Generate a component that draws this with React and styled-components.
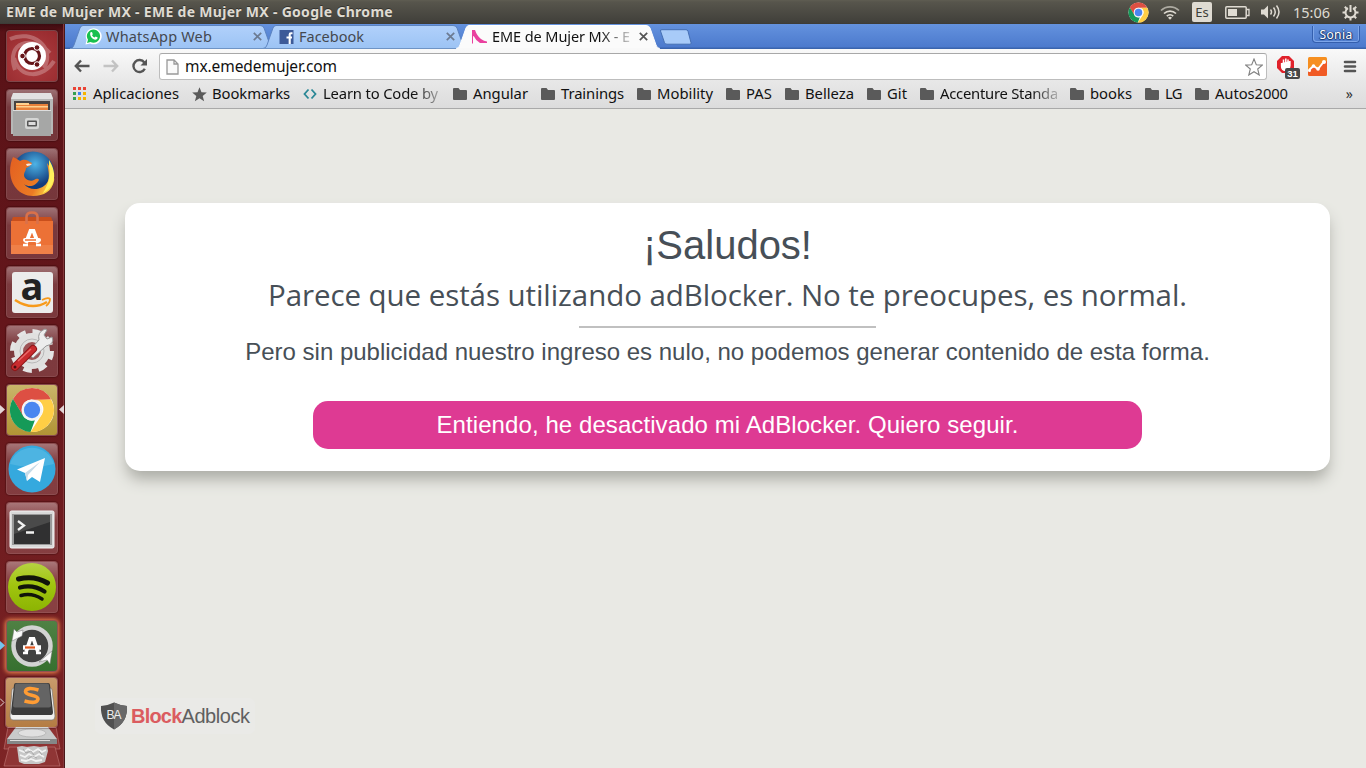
import React, { useLayoutEffect, useRef, useState } from "react";
import styled, { createGlobalStyle } from "styled-components";

const Global = createGlobalStyle`
  * { box-sizing: border-box; }
  body { margin: 0; overflow: hidden; font-family: "Noto Sans", "Open Sans", sans-serif; }
  svg { display: block; flex: none; }
`;

const Desktop = styled.div`
  width: 1366px;
  height: 768px;
  display: flex;
  flex-direction: column;
  overflow: hidden;
`;

/* Text tracked so that it fills a given width */
const Tracked = styled.span`
  display: inline-block;
  white-space: pre;
`;

function Fit({ width, children }) {
  const ref = useRef(null);
  const [spacing, setSpacing] = useState(0);
  useLayoutEffect(() => {
    const natural = ref.current.getBoundingClientRect().width;
    setSpacing((width - natural) / children.length);
  }, []);
  return <Tracked ref={ref} style={{ letterSpacing: spacing }}>{children}</Tracked>;
}

/* ---------- top panel ---------- */
const Panel = styled.header`
  height: 24px;
  flex: none;
  display: flex;
  align-items: center;
  justify-content: space-between;
  padding: 0 7px 0 6px;
  background: linear-gradient(#5f5d52 0, #57554c 2px, #403f3a 23px, #3a3934 24px);
  color: #dfdbd2;
`;
const PanelTitle = styled.div`
  font-size: 14px;
  font-weight: 700;
  line-height: 22px;
  text-shadow: 0 -1px #33322e;
`;
const Indicators = styled.div`
  display: flex;
  align-items: center;
  height: 24px;
`;
const Indicator = styled.div`
  margin-right: ${(p) => p.$gap}px;
`;
const Keyboard = styled.div`
  width: 20px;
  height: 20px;
  margin-right: 13px;
  border-radius: 2px;
  background: #dfdbd2;
  color: #3f3e39;
  font-size: 13px;
  line-height: 20px;
  text-align: center;
`;
const Clock = styled.div`
  font-size: 14.5px;
  line-height: 22px;
  margin-right: 12px;
`;

function ChromeLogo({ size }) {
  return (
    <svg width={size} height={size} viewBox="0 0 48 48">
      <circle cx="24" cy="24" r="23" fill="#fff" />
      <path d="M24 1a23 23 0 0 1 20 12H24a11 11 0 0 0-10.500 8L4.100 12.500A23 23 0 0 1 24 1z" fill="#dd4f43" />
      <path d="M4.100 12.500 14.500 30A11 11 0 0 0 27 34.600L22.500 47A23 23 0 0 1 4.100 12.500z" fill="#159a58" />
      <path d="M44 13a23 23 0 0 1-21.500 34L33.500 30A11 11 0 0 0 29 13z" fill="#ffce45" />
      <path d="M24 13H44L24 14zM4.100 12.500 14.500 30V18z" fill="#dd4f43" />
      <path d="M4.100 12.500 14.500 30 10 30z" fill="#159a58" />
      <circle cx="24" cy="24" r="11" fill="#f4f4f4" />
      <circle cx="24" cy="24" r="8.500" fill="#4a86f0" />
    </svg>
  );
}

function TopPanel() {
  return (
    <Panel>
      <PanelTitle><Fit width={387}>EME de Mujer MX - EME de Mujer MX - Google Chrome</Fit></PanelTitle>
      <Indicators>
        <Indicator $gap={11}><ChromeLogo size={21} /></Indicator>
        <Indicator $gap={12}>
          <svg width="20" height="16" viewBox="0 0 20 16" fill="none" stroke="#dfdbd2" strokeWidth="1.700">
            <path d="M1 6.500a13 13 0 0 1 18 0" opacity=".65" />
            <path d="M4 9.500a8.700 8.700 0 0 1 12 0" />
            <path d="M6.800 12.200a4.600 4.600 0 0 1 6.400 0" />
            <path d="M8 13.700a3 3 0 0 1 4 0l-2 2z" fill="#dfdbd2" stroke="none" />
          </svg>
        </Indicator>
        <Keyboard>Es</Keyboard>
        <Indicator $gap={11}>
          <svg width="25" height="13" viewBox="0 0 25 13">
            <rect x=".8" y=".8" width="20.400" height="11.400" rx="1" fill="none" stroke="#dfdbd2" strokeWidth="1.500" />
            <path d="M22 3.500h2v6h-2" fill="none" stroke="#dfdbd2" strokeWidth="1.300" />
            <rect x="3" y="3" width="9" height="7" fill="#dfdbd2" />
          </svg>
        </Indicator>
        <Indicator $gap={11}>
          <svg width="21" height="16" viewBox="0 0 21 16" fill="none" stroke="#dfdbd2" strokeWidth="1.500">
            <path d="M0 5.500h3l4-4v13l-4-4H0z" fill="#dfdbd2" stroke="none" />
            <path d="M9.500 5.500q2 2.500 0 5M12.500 3.500q3.500 4.500 0 9M15.500 1.500q5 6.500 0 13" />
          </svg>
        </Indicator>
        <Clock><Fit width={37}>15:06</Fit></Clock>
        <svg width="17" height="17" viewBox="0 0 17 17" fill="none" stroke="#dfdbd2" strokeWidth="2">
          <path d="M6 4.200a5 5 0 1 0 5 0M8.500 1v7" />
          <path d="M.5 8.500h3M13.500 8.500h3M8.500 13.500v3M2.800 2.800l2.200 2.200M14.200 2.800 12 5M2.800 14.200 5 12M14.200 14.200 12 12" />
        </svg>
      </Indicators>
    </Panel>
  );
}

/* ---------- launcher ---------- */
const Body = styled.div`
  flex: 1;
  display: flex;
  min-height: 0;
`;
const Launcher = styled.nav`
  width: 65px;
  flex: none;
  padding: 6px 0 0 6px;
  display: flex;
  flex-direction: column;
  gap: 7px;
  background: linear-gradient(#3d0b10 0, #591217 8px, #64161b 40%, #7d2425 100%);
  border-right: 1px solid #4a1719;
  box-shadow: inset -1px 0 #85393b;
`;
const tints = {
  red: "radial-gradient(circle at 50% 60%, #b14043, #96292d)",
  glass: "linear-gradient(rgba(255,255,255,.4), rgba(255,255,255,.16) 35%, rgba(255,255,255,.15))",
  gold: "linear-gradient(#c9b56a, #b19435)",
  green: "linear-gradient(#4f8144, #36702f)",
  tan: "linear-gradient(#c99b6c, #b47c43)",
};
const Tile = styled.div`
  position: relative;
  width: 52px;
  height: 52px;
  flex: none;
  display: flex;
  align-items: center;
  justify-content: center;
  border-radius: 4px;
  border: 1px solid rgba(255, 255, 255, 0.22);
  background: ${(p) => tints[p.$tint]};
  background-clip: padding-box;
  box-shadow: ${(p) => (p.$glow ? "0 0 4px 1px #ef8a50" : "0 0 1px 1px rgba(40,0,0,.3)")};
  ${(p) => p.$folded && "margin: -2px 0 0 -1px; width: 53px; height: 51px;"}
`;
const Pip = styled.svg`
  position: absolute;
  top: 20px;
  left: ${(p) => (p.$right ? 51 : -7)}px;
`;
const Stack = styled.div`
  margin: -8px 0 0 -3px;
`;

const glyphs = {
  ubuntu: (
    <svg width="50" height="50" viewBox="0 0 50 50">
      <g fill="none" stroke="#fff" strokeWidth="4" opacity=".25">
        <path d="M8 39C-2 10 26 4 43 22" /><path d="M3 8c22-10 46 8 34 29" /><path d="M47 30c-10 17-34 19-40-3" />
      </g>
      <circle cx="25" cy="25" r="14" fill="#fff" />
      <circle cx="25" cy="25" r="7.500" fill="none" stroke="#661519" strokeWidth="3.200" />
      <g fill="#661519" stroke="#fff" strokeWidth="1"><circle cx="15.500" cy="25" r="2.800" /><circle cx="30" cy="16.500" r="2.800" /><circle cx="30" cy="33.500" r="2.800" /></g>
    </svg>
  ),
  files: (
    <svg width="50" height="50" viewBox="0 0 50 50">
      <path d="M6 4q0-1 1-1h36q1 0 1 1l2 4v36H4V8z" fill="#b7b8b7" />
      <path d="M6 3h38l2 6H4z" fill="#e2e2e2" />
      <path d="M7 11h36v12H7z" fill="#474342" />
      <path d="M9 14h32v8H9z" fill="#e8813a" /><path d="M9 13h13v2H9zM9 16h32v1.500H9z" fill="#ffd18e" />
      <path d="M6 20h38v26H6z" fill="#a6a7a6" /><path d="M6 20h38v1H6z" fill="#ddd" />
      <rect x="18" y="28" width="14" height="11" rx="2" fill="#d5d6d5" /><rect x="20" y="30.500" width="10" height="6" rx="1" fill="#555" /><path d="M21.500 32h7v3h-7z" fill="#ddd" />
    </svg>
  ),
  firefox: (
    <svg width="50" height="50" viewBox="0 0 50 50">
      <defs>
        <radialGradient id="globe" cx="55%" cy="30%"><stop offset="0" stopColor="#4db3e6" /><stop offset="1" stopColor="#123c7c" /></radialGradient>
        <linearGradient id="fox" x1="0" x2="1" y1=".3" y2=".7"><stop offset="0" stopColor="#e46322" /><stop offset=".65" stopColor="#eb7b24" /><stop offset="1" stopColor="#ffe04a" /></linearGradient>
      </defs>
      <circle cx="26" cy="23.500" r="21" fill="url(#globe)" />
      <path d="M6 8c3 1 5 3 7 4 5-3 8 0 12 2-1 3-4 4-6 5 0 3-2 4-2 7 0 4 6 7 10 5 2-1 4-2 5 0-3 6-10 8-15 4 6 8 20 6 24-3 2-6 0-12-1-18 5 7 8 14 7 18-2 10-10 15-21 15C7 47-2 26 6 8z" fill="url(#fox)" />
      <path d="M42 11c4 6 7 15 4 22-2 6-6 9-10 11 5-8 8-17 6-26z" fill="#fff05c" />
      <path d="M19 15q3-1 6 0-2 2-5 2z" fill="#f7e9df" />
    </svg>
  ),
  software: (
    <svg width="50" height="50" viewBox="0 0 50 50">
      <path d="m6 9 38 0 2 5H4z" fill="#c94f1c" />
      <path d="M4 13h42v33H4z" fill="#ec7136" /><path d="M4 37h42v9H4z" fill="#ef8048" />
      <path d="M19.500 16V9q0-4.500 5.500-4.500T30.500 9v7" fill="none" stroke="#d9714a" strokeWidth="2.600" />
      <path d="m19 35 4.500-12h3l4.500 12" fill="none" stroke="#fff" strokeWidth="3.800" />
      <path d="M16 37h5M29 37h5" stroke="#fff" strokeWidth="2.500" />
      <rect x="16" y="30" width="18" height="4" rx="2" fill="#fff" /><path d="M18 32h11" stroke="#ec7136" strokeWidth="1.500" />
    </svg>
  ),
  amazon: (
    <svg width="50" height="50" viewBox="0 0 50 50">
      <rect x="5" y="5" width="41" height="41" rx="3" fill="#ececec" />
      <text x="25" y="33" textAnchor="middle" fontFamily="Open Sans, sans-serif" fontWeight="700" fontSize="38" fill="#222">a</text>
      <path d="M8 33q17 11 32 2" fill="none" stroke="#f79a1c" strokeWidth="2.600" />
      <path d="M35 33q6-3 8-1 0 4-4 7" fill="none" stroke="#f79a1c" strokeWidth="1.800" />
    </svg>
  ),
  settings: (
    <svg width="50" height="50" viewBox="0 0 50 50">
      <circle cx="25" cy="25" r="19.500" fill="none" stroke="#e4e4e4" strokeWidth="5" strokeDasharray="8.500 6.800" />
      <circle cx="25" cy="25" r="13.500" fill="#9c5356" stroke="#e0e0df" strokeWidth="9" />
      <circle cx="25" cy="25" r="12" fill="none" stroke="#b9b9b9" strokeWidth="1" />
      <path d="m20 27 12-13q-2-8 6-11l2 1-3 5 3 4 5-2q3 7-6 9L26 32z" fill="#ededed" stroke="#999" />
      <path d="m8 41 18-18" stroke="#8e1619" strokeWidth="8" strokeLinecap="round" />
      <path d="m8 41 18-18" stroke="#c92b2e" strokeWidth="6" strokeLinecap="round" />
      <path d="m11 35 13-12" stroke="#ea6969" strokeWidth="1.500" /><circle cx="8" cy="41" r="1.500" fill="#4c0e10" />
    </svg>
  ),
  chrome: <ChromeLogo size={46} />,
  telegram: (
    <svg width="50" height="50" viewBox="0 0 50 50">
      <circle cx="25" cy="25" r="23.500" fill="#35a9de" /><path d="M3 20a23 23 0 0 1 44 0Q25 26 3 20z" fill="#65bfe5" opacity=".5" />
      <path d="M10 25.500 38 14l-5 24-8-5-5 4-2-8z" fill="#fff" /><path d="m18 29 15-11-12 13-1 6z" fill="#c6dbe8" />
    </svg>
  ),
  terminal: (
    <svg width="50" height="50" viewBox="0 0 50 50">
      <rect x="3" y="8" width="44" height="37" rx="1.500" fill="#d9d9d9" stroke="#f4f4f4" />
      <path d="M5 11h40v31H5z" fill="#999" /><path d="M7 12h36v29H7z" fill="#303031" /><path d="M7 12h36v7L7 31z" fill="#4a4a4a" />
      <path d="m11 18 6 4.500-6 4.500M19 29.500h8" fill="none" stroke="#f2f2f2" strokeWidth="2.300" />
    </svg>
  ),
  spotify: (
    <svg width="50" height="50" viewBox="0 0 50 50">
      <defs><linearGradient id="lime" x2="0" y2="1"><stop stopColor="#b6d242" /><stop offset=".45" stopColor="#a1c50f" /><stop offset="1" stopColor="#8cb402" /></linearGradient></defs>
      <circle cx="25" cy="25" r="24" fill="url(#lime)" />
      <g fill="none" stroke="#11140a" strokeLinecap="round"><path d="M11.500 17q16-4 29 4" strokeWidth="5" /><path d="M13 25.500q13-3.500 24.500 4" strokeWidth="4.200" /><path d="M14 33.500q11-3 21 3.500" strokeWidth="3.500" /></g>
    </svg>
  ),
  updater: (
    <svg width="50" height="50" viewBox="0 0 50 50">
      <circle cx="25" cy="25" r="18.500" fill="#414241" stroke="#d2d3d2" strokeWidth="4.500" />
      <path d="M5 20 7 8l3 3 6-2-1 6zM45 30l-2 13-3-4-8 2z" fill="#fafafa" stroke="#777" strokeWidth=".5" />
      <path d="m19 31 4.500-13h3l4.500 13" fill="none" stroke="#fff" strokeWidth="3.800" /><path d="M16 32h5M29 32h5" stroke="#fff" strokeWidth="2.500" />
      <path d="M16 26.500h18" stroke="#fff" strokeWidth="4.500" /><path d="M18 26.500h10" stroke="#e2551d" strokeWidth="2.200" />
    </svg>
  ),
  sublime: (
    <svg width="50" height="50" viewBox="0 0 50 50">
      <path d="M7 10h36q2 0 2 2l3 26q0 4-3 4H6q-3 0-3-4L5 12q0-2 2-2z" fill="#f0f0ef" stroke="#777" strokeWidth=".7" />
      <path d="M9 5h32q2 0 2 2l3 27q0 3-2 3H6q-2 0-2-3L7 7q0-2 2-2z" fill="#3b3b3b" />
      <path d="M10 5.500h30q2 0 2 2l2 20q0 2-2 2H8q-2 0-2-2l2-20q0-2 2-2z" fill="#646464" />
      <path d="M31.500 12q-12-3.500-13 1.500c0 5 12.500 2.500 12.500 7.500q-1 5.500-13.500 2" fill="none" stroke="#ff9c34" strokeWidth="3.600" />
    </svg>
  ),
};

const dock = [
  ["ubuntu", "red"], ["files", "glass"], ["firefox", "glass"], ["software", "glass"], ["amazon", "glass"],
  ["settings", "glass"], ["chrome", "gold"], ["telegram", "glass"], ["terminal", "glass"], ["spotify", "glass"],
  ["updater", "green"], ["sublime", "tan"],
];

function Dock() {
  return (
    <Launcher>
      {dock.map(([name, tint]) => (
        <Tile key={name} $tint={tint} $glow={name === "updater"} $folded={name === "sublime"}>
          {glyphs[name]}
          {name === "chrome" && <>
            <Pip width="6" height="9"><path d="M0 0 5 4.500 0 9z" fill="#e4d6d7" /></Pip>
            <Pip $right width="6" height="9"><path d="M6 0 1 4.500 6 9z" fill="#e4d6d7" /></Pip>
          </>}
          {name === "updater" && <Pip width="6" height="9"><path d="M0 0 5 4.500 0 9z" fill="#74c4ee" /></Pip>}
          {name === "sublime" && <Pip width="6" height="9"><path d="M1 .5 5 4.500 1 8.500" fill="none" stroke="#e4d6d7" /></Pip>}
        </Tile>
      ))}
      <Stack>
        <svg width="58" height="42" viewBox="0 0 58 42">
          <path d="M5 0h48l4 22H1z" fill="#8f3333" stroke="#c27b79" strokeWidth=".6" />
          <path d="M13 0h32l9 12H4z" fill="#c9caca" /><path d="M4 12h50v5H4z" fill="#858787" /><path d="M7 13h40v1H7z" fill="#ddd" />
          <ellipse cx="29" cy="6" rx="14" ry="4" fill="#e0e0e0" stroke="#aaa" strokeWidth=".7" />
          <path d="M6 20h46l5 19H1z" fill="#8f3535" stroke="#c27b79" strokeWidth=".6" />
          <path d="m14 20 5-1 5 1 7-1 6 1 7-1 1 5-3 11-6 2H21l-5-2z" fill="#c7c7c7" />
          <path d="m16 23 5 2 4-3 5 3 5-3 4 3 4-2M17 28l5 2 4-3 5 3 5-3 5 3M18 33l5 1 5-2 5 2 6-1" fill="none" stroke="#f2f2f2" strokeWidth="1.800" />
          <path d="m20 22 3 4 5-2 3 4M25 32l4-3 5 2M36 24l3 4" fill="none" stroke="#999" strokeWidth=".7" />
        </svg>
      </Stack>
    </Launcher>
  );
}

/* ---------- browser ---------- */
const Browser = styled.main`
  flex: 1;
  min-width: 0;
  display: flex;
  flex-direction: column;
`;
const TabStrip = styled.div`
  height: 25px;
  flex: none;
  display: flex;
  padding-left: 7px;
  background: linear-gradient(#6492de, #4c7acd 23px, #3a64ad 24px, #3a64ad);
`;
const Tab = styled.div`
  position: relative;
  z-index: ${(p) => (p.$active ? 2 : 1)};
  width: 204px;
  height: 25px;
  margin-right: -11px;
  padding: 0 14px 0 13px;
  display: flex;
  align-items: center;
  gap: 4px;
  color: ${(p) => (p.$active ? "#111" : "#44484f")};
`;
const TabShape = styled.svg`
  position: absolute;
  inset: 0 auto auto -2px;
  z-index: -1;
`;
const TabTitle = styled.div`
  flex: 1;
  min-width: 0;
  height: 23px;
  line-height: 23px;
  font-size: 14.500px;
  white-space: nowrap;
  ${(p) => p.$fade && "mask-image: linear-gradient(90deg, #000 108px, transparent 146px);"}
`;
const NewTab = styled.svg`
  margin: 5px 0 0 8px;
`;
const UserBadge = styled.div`
  margin: 2px 6px 0 auto;
  width: 48px;
  height: 17px;
  border: 1px solid #345fae;
  border-top: 0;
  border-radius: 0 0 4px 4px;
  box-shadow: inset 1px -1px #7da6e9, inset -1px 0 #7da6e9;
  color: #fff;
  font-size: 12px;
  line-height: 18px;
  text-align: center;
  text-shadow: 0 1px 1px #163468, 1px 0 1px #163468, -1px 0 1px #163468;
`;
const Toolbar = styled.div`
  height: 31px;
  flex: none;
  display: flex;
  align-items: center;
  padding: 4px 8px 0 9px;
  background: linear-gradient(#f9f9f9, #e9e9e9);
`;
const Omnibox = styled.div`
  width: 1108px;
  height: 27px;
  margin: 0 9px 0 11px;
  padding: 0 3px 0 6px;
  display: flex;
  align-items: center;
  gap: 6px;
  background: #fff;
  border: 1px solid #bdbdbd;
  border-top-color: #a8a8a8;
  border-radius: 3px;
  font-size: 15.500px;
  color: #111;
`;
const Url = styled.div`
  flex: 1;
  line-height: 24px;
  padding-bottom: 2px;
`;
const Extension = styled.div`
  margin-left: ${(p) => p.$gap || 0}px;
`;
const Bookmarks = styled.div`
  height: 29px;
  flex: none;
  display: flex;
  align-items: center;
  gap: 13px;
  padding: 0 13px 0 8px;
  background: linear-gradient(#e8e8e8, #dcdcdc);
  border-bottom: 1px solid #a9a9a9;
`;
const Bookmark = styled.div`
  display: flex;
  align-items: center;
  height: 26px;
`;
const BookmarkIcon = styled.div`
  width: 20px;
`;
const BookmarkName = styled.div`
  width: ${(p) => p.$w}px;
  white-space: nowrap;
  font-size: 14.800px;
  line-height: 24px;
  padding-bottom: 2px;
  color: #111;
  ${(p) => p.$fade && "mask-image: linear-gradient(90deg, #000 calc(100% - 26px), rgba(0,0,0,.25));"}
`;
const Overflow = styled.div`
  margin-left: auto;
  font-size: 14px;
  line-height: 24px;
  color: #333;
`;

function TabBox({ active, icon, title, width }) {
  return (
    <Tab $active={active}>
      <TabShape width="204" height="25" viewBox="0 0 204 25">
        <defs><linearGradient id="tabBlue" x2="0" y2="1"><stop stopColor="#b1d1fb" /><stop offset="1" stopColor="#9cc3f4" /></linearGradient></defs>
        <path d="M0 24.500Q3 24.500 4 21L10 4Q11 1.500 13 1.500H190Q193 1.500 194 4L200 21Q201 24.500 204 24.500" fill={active ? "#fbfbfb" : "url(#tabBlue)"} stroke={active ? "#fff" : "#587fbb"} strokeWidth={active ? 1 : 0.9} />
        {active ? <path d="M1 24.500H203" stroke="#f9f9f9" /> : <path d="M0 24.500H204" stroke="#6f94c5" />}
      </TabShape>
      {icon}
      <TabTitle $fade={active}><Fit width={width}>{title}</Fit></TabTitle>
      <svg width="9" height="9" viewBox="0 0 9 9"><path d="m.8.8 7.400 7.400M8.200.8.800 8.200" stroke={active ? "#555" : "#6c7b92"} strokeWidth="1.700" /></svg>
    </Tab>
  );
}

const whatsapp = (
  <svg width="17" height="17" viewBox="0 0 17 17">
    <path d="M.5 16.500 1.600 12A8 8 0 1 1 5 15.400z" fill="#fff" />
    <path d="M2 15 3 11.800A6.600 6.600 0 1 1 5.500 14z" fill="#19c04f" />
    <path d="M5.500 4.200 7 4l.8 2.200-.8 1q1 1.700 2.600 2.400l1-1.100 2.100 1q0 2-2.200 2.300C7.500 11.500 4 7.500 5.500 4.200z" fill="#fff" />
  </svg>
);
const facebook = (
  <svg width="17" height="16" viewBox="0 0 17 16"><path d="M1.500 1h14v14h-14z" fill="#3d5a98" /><path d="M14.500 4.200H13q-1.300 0-1.300 1.300V15M8.500 8.500H14" fill="none" stroke="#fff" strokeWidth="2.100" /></svg>
);
const shoe = (
  <svg width="17" height="16" viewBox="0 0 17 16"><path d="M1 1h3q2 6 6 9 3 2 6 2.500V14H9Q5 12 3 7.500L2 7v7.500H1z" fill="#ea419f" /></svg>
);
const folder = (
  <svg width="14" height="12" viewBox="0 0 14 12"><path d="M0 1q0-1 1-1h4.500l1.500 2h6q1 0 1 1v8q0 1-1 1H1q-1 0-1-1z" fill="#5a5a5a" /></svg>
);
const appGrid = (
  <svg width="14" height="14" viewBox="0 0 14 14">
    {["#ea4335", "#ea4335", "#ea4335", "#34a04f", "#3d82ee", "#f5b400", "#34a04f", "#f5b400", "#f5b400"].map((c, i) => (
      <rect key={i} x={(i % 3) * 5} y={Math.floor(i / 3) * 5} width="3" height="3" fill={c} />
    ))}
  </svg>
);
const starSolid = (
  <svg width="15" height="15" viewBox="0 0 15 15"><path d="m7.500.3 2 5 5.300.3-4.100 3.400 1.400 5.200-4.600-2.900L2.900 14.200 4.300 9 .2 5.600l5.300-.3z" fill="#5a5a5a" /></svg>
);
const brackets = (
  <svg width="14" height="12" viewBox="0 0 14 12" fill="none" stroke="#2a8795" strokeWidth="1.800"><path d="M5.500 1.500 1.500 6l4 4.500M8.500 1.500l4 4.500-4 4.500" /></svg>
);

const links = [
  [appGrid, "Aplicaciones", 86, 86], [starSolid, "Bookmarks", 78, 78], [brackets, "Learn to Code by", 117, 115, true],
  [folder, "Angular", 55, 55], [folder, "Trainings", 63, 63], [folder, "Mobility", 56, 56], [folder, "PAS", 26, 26],
  [folder, "Belleza", 49, 49], [folder, "Git", 20, 20], [folder, "Accenture Standa", 117, 118, true],
  [folder, "books", 42, 42], [folder, "LG", 17, 17], [folder, "Autos2000", 73, 73],
];

/* ---------- page ---------- */
const Page = styled.section`
  flex: 1;
  min-height: 0;
  padding: 94px 36px 0 60px;
  background: #e9e9e4;
  font-family: "Liberation Sans", Arial, sans-serif;
  color: #474f57;
`;
const Card = styled.div`
  height: 268px;
  padding-top: 19px;
  display: flex;
  flex-direction: column;
  align-items: center;
  border-radius: 15px;
  background: #fff;
  box-shadow: 0 10px 15px -2px #aaaba4;
`;
const Heading = styled.h1`
  margin: 0;
  font-size: 40px;
  font-weight: 400;
  line-height: 46px;
`;
const Lead = styled.p`
  margin: 6px 0 0;
  font-family: "Open Sans", sans-serif;
  font-size: 29.500px;
  line-height: 42px;
`;
const Rule = styled.div`
  width: 297px;
  height: 2px;
  margin-top: 10px;
  background: #c0c0c0;
`;
const Detail = styled.p`
  margin: 10px 0 0;
  font-size: 24px;
  line-height: 28px;
`;
const Confirm = styled.button`
  width: 829px;
  height: 48px;
  margin-top: 35px;
  padding: 0;
  border: 0;
  border-radius: 15px;
  background: #de3a93;
  color: #fff;
  font: 24px/48px "Liberation Sans", Arial, sans-serif;
`;
const Brand = styled.div`
  width: 160px;
  height: 36px;
  margin: 227px 0 0 -30px;
  padding-left: 5px;
  display: flex;
  align-items: center;
  gap: 3px;
  border-radius: 6px;
  background: #eaeae7;
  color: #606060;
  font-size: 20px;
`;
const Red = styled.b`
  color: #db5c60;
`;

export default function App() {
  return (
    <Desktop>
      <Global />
      <TopPanel />
      <Body>
        <Dock />
        <Browser>
          <TabStrip>
            <TabBox icon={whatsapp} title="WhatsApp Web" width={106} />
            <TabBox icon={facebook} title="Facebook" width={65} />
            <TabBox active icon={shoe} title="EME de Mujer MX - E" width={138} />
            <NewTab width="33" height="17" viewBox="0 0 33 17"><path d="M3 .7h24q1.500 0 2 1.500l3 11.500q.5 1.500-1 1.500H8q-2 0-2.500-1.500L1.500 2Q1 .7 3 .7z" fill="#a8cbf8" stroke="#456fb3" /></NewTab>
            <UserBadge><Fit width={33}>Sonia</Fit></UserBadge>
          </TabStrip>
          <Toolbar>
            <svg width="74" height="17" viewBox="0 0 74 17" fill="none" strokeWidth="2.400">
              <path d="M7 2.500 1.800 8 7 13.500M2 8h13.500" stroke="#555" />
              <path d="m38 2.500 5.200 5.500-5.200 5.500M43 8H29.500" stroke="#c3c3c3" />
              <path d="M70.300 4.500a6 6 0 1 0 .5 6.300" stroke="#555" /><path d="M73 1v6.500h-6.500z" fill="#555" />
            </svg>
            <Omnibox>
              <svg width="13" height="16" viewBox="0 0 13 16"><path d="M1 1h7l4 4v10H1zM8 1v4h4" fill="#fafafa" stroke="#999" strokeWidth="1.300" /></svg>
              <Url><Fit width={152}>mx.emedemujer.com</Fit></Url>
              <svg width="18" height="18" viewBox="0 0 18 18"><path d="m9 1 2.300 5.700 6 .4-4.600 3.900 1.500 6L9 13.700 3.800 17l1.500-6L.7 7.100l6-.4z" fill="#fff" stroke="#808080" strokeWidth="1.100" /></svg>
            </Omnibox>
            <Extension>
              <svg width="24" height="24" viewBox="0 0 24 24">
                <path d="M6 1h7l5 5v7l-5 5H6l-5-5V6z" fill="#e0222b" />
                <path d="M5.500 8v3q0 4.500 4 4.500t4.500-5V6" fill="#fff" stroke="#fff" strokeWidth="1.300" />
                <path d="M7.500 4.500V11M9.800 3.500v7M12 4.500V11" stroke="#fff" strokeWidth="1.500" />
                <rect x="9" y="13" width="15" height="11" rx="2" fill="#484848" />
                <text x="16.500" y="22" textAnchor="middle" fontSize="9.500" fontWeight="700" fontFamily="Liberation Sans, sans-serif" fill="#fff">31</text>
              </svg>
            </Extension>
            <Extension $gap={8}>
              <svg width="19" height="19" viewBox="0 0 19 19">
                <rect width="19" height="19" rx="1.500" fill="#f68f20" /><path d="M0 14 5 9l5 3 6-7 3-1v13q0 2-2 2H2q-2 0-2-2z" fill="#f05a25" />
                <path d="m1 13 4.500-4 4.500 3 6-7.500" fill="none" stroke="#fff" strokeWidth="2" /><g fill="#fff"><circle cx="1.500" cy="13.500" r="1.500" /><circle cx="5.500" cy="9" r="1.800" /><circle cx="10" cy="12" r="1.800" /><circle cx="16" cy="5" r="2" /></g>
              </svg>
            </Extension>
            <Extension $gap={16}>
              <svg width="14" height="13" viewBox="0 0 14 13"><path d="M2 2h10M2 6.500h10M2 11h10" stroke="#555" strokeWidth="2.600" strokeLinecap="round" /></svg>
            </Extension>
          </Toolbar>
          <Bookmarks>
            {links.map(([icon, name, width, textWidth, fade]) => (
              <Bookmark key={name}>
                <BookmarkIcon>{icon}</BookmarkIcon>
                <BookmarkName $w={width} $fade={fade}><Fit width={textWidth}>{name}</Fit></BookmarkName>
              </Bookmark>
            ))}
            <Overflow>»</Overflow>
          </Bookmarks>
          <Page>
            <Card>
              <Heading>¡Saludos!</Heading>
              <Lead><Fit width={919}>Parece que estás utilizando adBlocker. No te preocupes, es normal.</Fit></Lead>
              <Rule />
              <Detail>Pero sin publicidad nuestro ingreso es nulo, no podemos generar contenido de esta forma.</Detail>
              <Confirm><Fit width={582}>Entiendo, he desactivado mi AdBlocker. Quiero seguir.</Fit></Confirm>
            </Card>
            <Brand>
              <svg width="28" height="28" viewBox="0 0 28 28">
                <path d="M14 .5q6 3 13 3.500 1 16-13 23.500Q0 20 1 4 8 3.500 14 .5z" fill="#505050" /><path d="M14 .5q6 3 13 3.500 1 16-13 23.500z" fill="#686868" />
                <text x="14" y="17" textAnchor="middle" fontSize="12" textLength="15" fontFamily="Liberation Sans, sans-serif" fill="#eee">BA</text>
              </svg>
              <div><Red><Fit width={50.5}>Block</Fit></Red><Fit width={68}>Adblock</Fit></div>
            </Brand>
          </Page>
        </Browser>
      </Body>
    </Desktop>
  );
}
